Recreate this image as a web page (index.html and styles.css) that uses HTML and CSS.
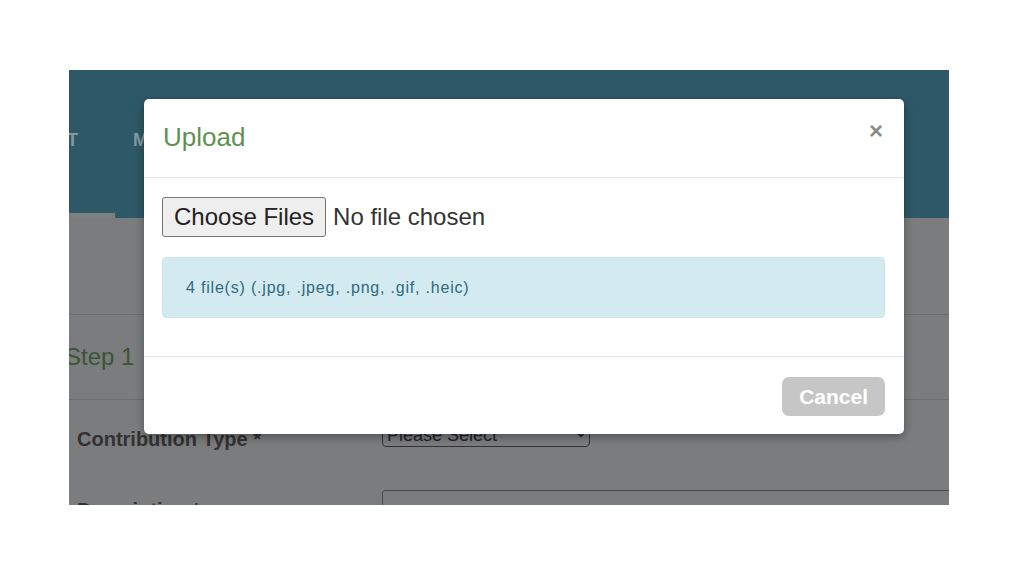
FILE: index.html
```html
<!DOCTYPE html>
<html lang="en">
<head>
<meta charset="utf-8">
<title>Upload</title>
<link rel="stylesheet" href="styles.css">
</head>
<body>
<div class="frame">
  <nav class="topnav">
    <a class="nav-item nav-item--active">ABOUT</a>
    <a class="nav-item">MY ACCOUNT</a>
  </nav>
  <main class="page">
    <div class="page-top"></div>
    <section class="step-head">
      <h2 class="step-title">Step 1</h2>
    </section>
    <form class="form-grid">
      <label class="form-label">Contribution Type *</label>
      <select class="form-select"><option>Please Select</option></select>
      <label class="form-label form-label--low">Description *</label>
      <input class="form-input" type="text">
    </form>
  </main>

  <div class="modal" role="dialog">
    <header class="modal-header">
      <h1 class="modal-title">Upload</h1>
      <span class="modal-close">&times;</span>
    </header>
    <div class="modal-body">
      <input class="file-input" type="file" multiple>
      <div class="alert-info">4 file(s) (.jpg, .jpeg, .png, .gif, .heic)</div>
    </div>
    <footer class="modal-footer">
      <button class="btn-cancel" type="button">Cancel</button>
    </footer>
  </div>
</div>
</body>
</html>
```

FILE: styles.css
```css
* { box-sizing: border-box; }

html, body {
  margin: 0;
  padding: 0;
  background: #ffffff;
  font-family: "Liberation Sans", Arial, sans-serif;
}

body {
  padding: 70px 0 0 69px;
  width: 1024px;
  height: 576px;
  overflow: hidden;
}

.frame {
  position: relative;
  width: 880px;
  height: 435px;
  overflow: hidden;
  background: #7b7c7e;
}

/* top navigation */
.topnav {
  display: flex;
  height: 148px;
  background: #2e5767;
}

.nav-item {
  display: flex;
  align-items: center;
  height: 148px;
  padding-bottom: 8px;
  font-size: 18px;
  font-weight: bold;
  color: #8399a2;
  white-space: nowrap;
}

.nav-item--active {
  width: 46px;
  justify-content: flex-end;
  padding-right: 37px;
  box-shadow: inset 0 -5px 0 #7d7e80;
}

.nav-item + .nav-item {
  margin-left: 18px;
}

/* page content under the overlay */
.page-top {
  height: 96px;
}

.step-head {
  height: 86px;
  border-top: 1px solid #6d6e70;
  border-bottom: 1px solid #6d6e70;
  display: flex;
  align-items: center;
}

.step-title {
  margin: 0 0 0 -4px;
  font-size: 24px;
  font-weight: normal;
  color: #3b5534;
}

.form-grid {
  display: grid;
  grid-template-columns: 305px 600px;
  grid-template-rows: 29px 40px;
  row-gap: 39px;
  padding: 22px 0 0 8px;
  margin: 0;
}

.form-label {
  font-size: 20px;
  font-weight: bold;
  color: #323232;
  align-self: start;
  padding-top: 6px;
}

.form-label--low {
  padding-top: 9px;
}

.form-select {
  width: 208px;
  height: 25px;
  font: 18px "Liberation Sans", Arial, sans-serif;
  color: #222;
  background: #7b7c7e;
  border: 1px solid #333;
  border-radius: 4px;
}

.form-input {
  width: 600px;
  height: 40px;
  background: #7b7c7e;
  border: 1px solid #4a4a4a;
  border-radius: 3px;
}

/* modal */
.modal {
  position: absolute;
  left: 75px;
  top: 29px;
  width: 760px;
  background: #ffffff;
  border-radius: 5px;
  box-shadow: 0 3px 9px rgba(0, 0, 0, 0.35);
}

.modal-header {
  display: flex;
  align-items: center;
  justify-content: space-between;
  height: 79px;
  padding: 0 21px 2px 19px;
  border-bottom: 1px solid #e5e5e5;
}

.modal-title {
  margin: 0;
  font-size: 26px;
  font-weight: normal;
  color: #5f9150;
}

.modal-close {
  margin-bottom: 12px;
  font-size: 24px;
  font-weight: bold;
  line-height: 1;
  color: #8a8a8a;
}

.modal-body {
  padding: 19px 19px 19px 18px;
}

.file-input {
  display: block;
  width: 420px;
  height: 40px;
  font: 24px "Liberation Sans", Arial, sans-serif;
  color: #333;
}

.file-input::file-selector-button {
  height: 40px;
  margin-right: 7px;
  padding: 0 11px;
  font: 24px "Liberation Sans", Arial, sans-serif;
  color: #222;
  background: #efefef;
  border: 1px solid #767676;
  border-radius: 3px;
}

.alert-info {
  margin: 20px 0 19px;
  padding: 19px 23px;
  font-size: 16px;
  line-height: 21px;
  letter-spacing: 0.8px;
  color: #2f6b80;
  background: #d3eaf0;
  border: 1px solid #c9e6ee;
  border-radius: 4px;
}

.modal-footer {
  display: flex;
  justify-content: flex-end;
  padding: 20px 19px 18px;
  border-top: 1px solid #e5e5e5;
}

.btn-cancel {
  height: 39px;
  padding: 0 17px;
  font: bold 21px "Liberation Sans", Arial, sans-serif;
  color: #ffffff;
  background: #c6c6c6;
  border: none;
  border-radius: 7px;
}
```
